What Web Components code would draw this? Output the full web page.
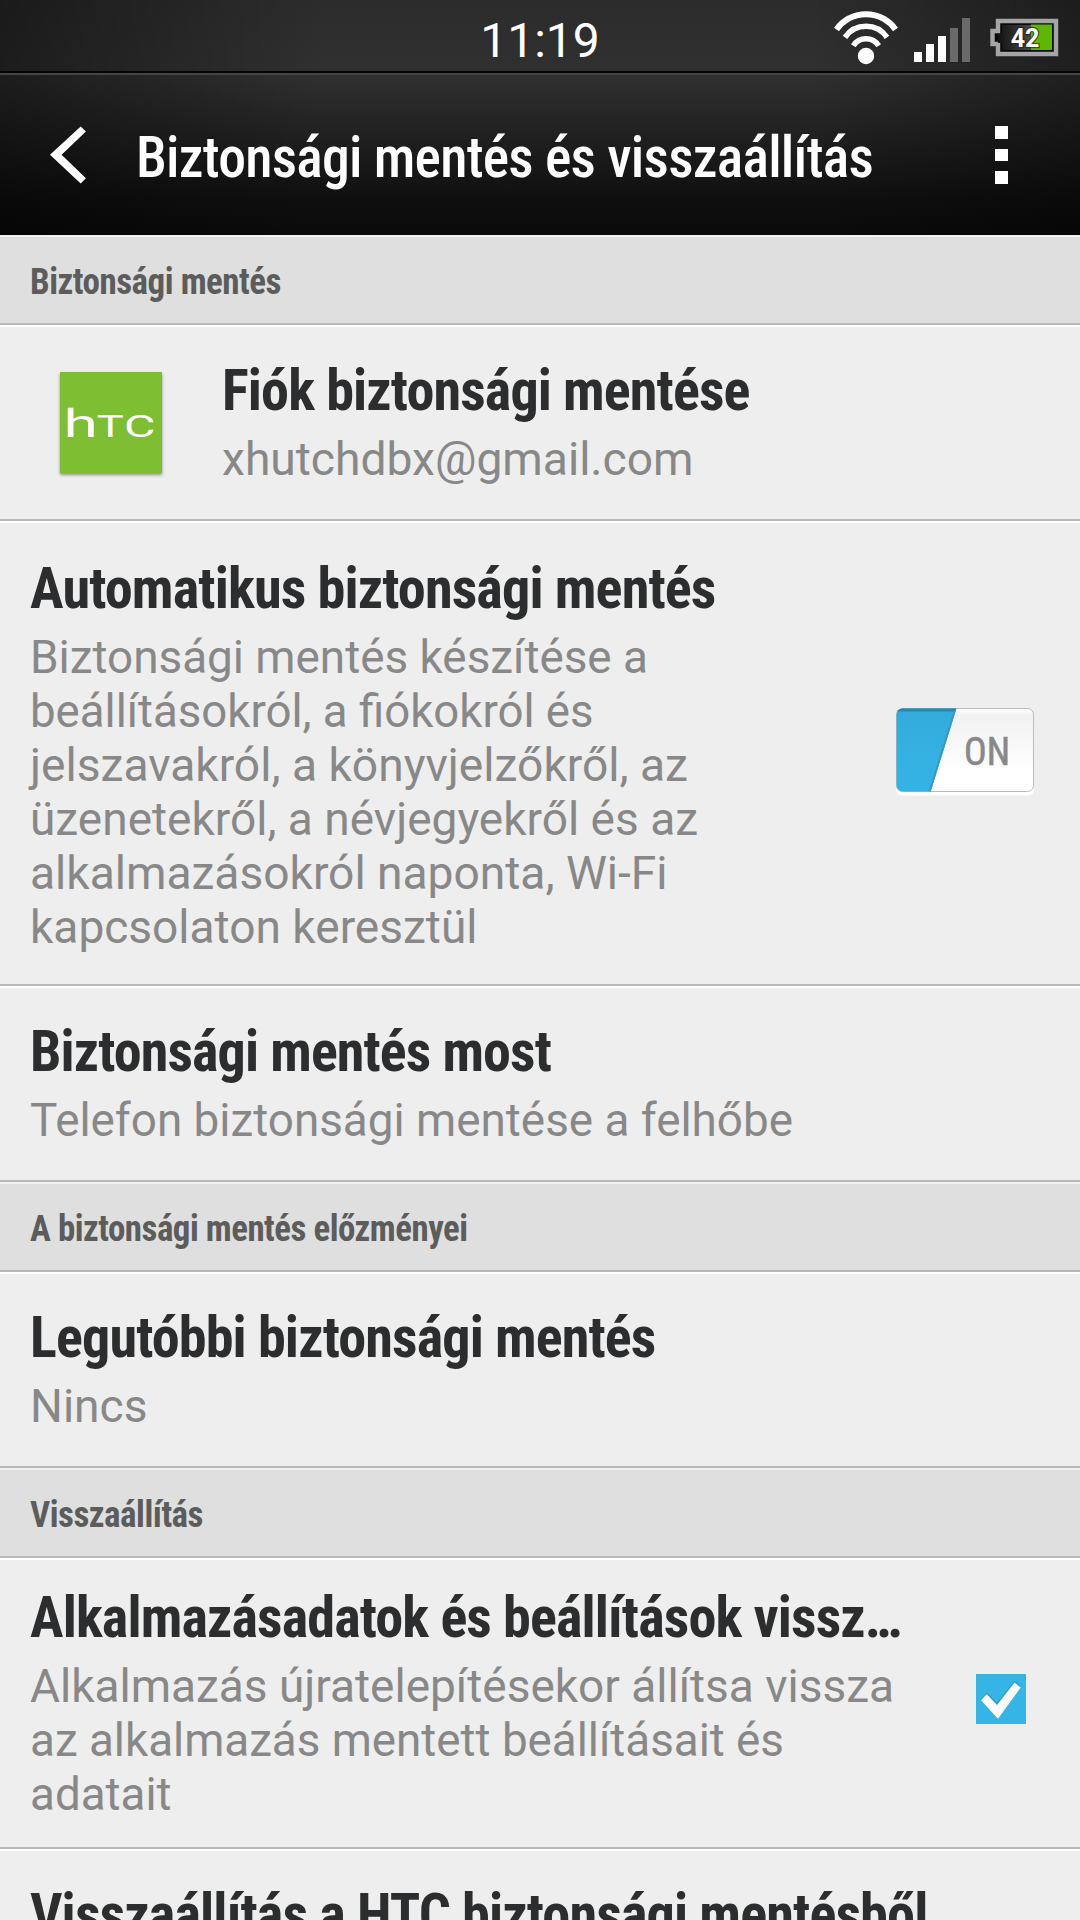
<!DOCTYPE html>
<html lang="hu">
<head>
<meta charset="utf-8">
<title>Biztonsági mentés és visszaállítás</title>
<style>
html, body {
  margin: 0;
  height: 1920px;
  overflow: hidden;
  background: #eee;
  font-family: Roboto, "Liberation Sans", sans-serif;
}
</style>
</head>
<body>
<phone-screen>
  <status-bar slot="top" time="11:19" battery="42"></status-bar>
  <action-bar slot="top"><fit-text width="737">Biztonsági mentés és visszaállítás</fit-text></action-bar>

  <section-header><fit-text width="251">Biztonsági mentés</fit-text></section-header>
  <setting-row style="--indent: 60px">
    <htc-logo slot="icon"></htc-logo>
    <fit-text slot="title" width="527.5">Fiók biztonsági mentése</fit-text>
    <fit-text width="471.5">xhutchdbx@gmail.com</fit-text>
  </setting-row>
  <setting-row style="--top: 31px; --bottom: 30px; --end: 44px">
    <fit-text slot="title" width="685.5">Automatikus biztonsági mentés</fit-text>
    <fit-text width="618">Biztonsági mentés készítése a</fit-text>
    <fit-text width="563.5">beállításokról, a fiókokról és</fit-text>
    <fit-text width="658">jelszavakról, a könyvjelzőkről, az</fit-text>
    <fit-text width="668">üzenetekről, a névjegyekről és az</fit-text>
    <fit-text width="637.5">alkalmazásokról naponta, Wi-Fi</fit-text>
    <fit-text width="447.5">kapcsolaton keresztül</fit-text>
    <toggle-switch slot="control">ON</toggle-switch>
  </setting-row>
  <setting-row>
    <fit-text slot="title" width="521">Biztonsági mentés most</fit-text>
    <fit-text width="763">Telefon biztonsági mentése a felhőbe</fit-text>
  </setting-row>

  <section-header><fit-text width="437.5">A biztonsági mentés előzményei</fit-text></section-header>
  <setting-row>
    <fit-text slot="title" width="625.5">Legutóbbi biztonsági mentés</fit-text>
    <fit-text width="117.5">Nincs</fit-text>
  </setting-row>

  <section-header><fit-text width="173">Visszaállítás</fit-text></section-header>
  <setting-row style="--top: 23px; --bottom: 26px; --end: 54px">
    <fit-text slot="title" width="871">Alkalmazásadatok és beállítások vissz…</fit-text>
    <fit-text width="864">Alkalmazás újratelepítésekor állítsa vissza</fit-text>
    <fit-text width="754">az alkalmazás mentett beállításait és</fit-text>
    <fit-text width="141.5">adatait</fit-text>
    <check-box slot="control"></check-box>
  </setting-row>
  <setting-row>
    <fit-text slot="title" width="897.5">Visszaállítás a HTC biztonsági mentésből</fit-text>
  </setting-row>
</phone-screen>

<script>
(function() {
function define(name, html, setup) {
  const template = document.createElement('template');
  template.innerHTML = html;

  customElements.define(name, class extends HTMLElement {
    constructor() {
      super();
      this.attachShadow({mode: 'open'});
      this.shadowRoot.appendChild(document.importNode(template.content, true));
    }

    connectedCallback() {
      if (setup) setup(this, this.shadowRoot);
    }
  });
}

define('phone-screen', `
<style>
:host {
  display: flex;
  flex-direction: column;
  width: 1080px;
  height: 1920px;
  overflow: hidden;
  background: #eee;
}
header {
  flex: none;
  background:
    linear-gradient(90deg, rgba(0,0,0,.4), rgba(0,0,0,0) 30%, rgba(0,0,0,0) 75%, rgba(0,0,0,.35)),
    linear-gradient(#2c2c2c, #303030 32%, #222 55%, #0f0f0f 85%, #0a0a0a);
}
main { flex: 1; min-height: 0; }
</style>
<header><slot name="top"></slot></header>
<main><slot></slot></main>`);

define('status-bar', `
<style>
:host {
  display: grid;
  grid-template-columns: 1fr auto 1fr;
  height: 71px;
  border-bottom: 2px solid #050505;
  color: #fff;
}
.time {
  grid-column: 2;
  padding-top: 12px;
  font-size: 48px;
  line-height: 57px;
}
.icons {
  display: flex;
  justify-content: flex-end;
  padding-right: 20px;
}
svg { display: block; font: 700 25px Roboto, sans-serif; }
</style>
<div class="time"></div>
<div class="icons">
  <svg width="230" height="71" viewBox="830 0 230 71">
    <g fill="none" stroke="#fff">
      <path stroke-width="6" d="M836.5 29.5A36 36 0 0 1 895.5 29.5"/>
      <path stroke-width="5.6" d="M845 37.3A25.5 25.5 0 0 1 887 37.3"/>
      <path stroke-width="5.4" d="M853.3 45.7A15 15 0 0 1 878.7 45.7"/>
    </g>
    <circle cx="866" cy="56" r="8.2" fill="#fff"/>
    <path fill="#fff" d="M914 52h8v10h-8zM926 44h8v18h-8zM938 36h8v26h-8z"/>
    <path fill="#6a6a6a" d="M950 28h8v34h-8zM962 18h8v44h-8z"/>
    <linearGradient id="empty"><stop stop-color="#111"/><stop offset="1" stop-color="#4a4a4a"/></linearGradient>
    <path fill="#0a0a0a" stroke="#a5a5a5" stroke-width="4.4" d="M998 21h58v33h-58v-10h-5.500v-13h5.500z"/>
    <path fill="url(#empty)" d="M1002 25h29v25h-29v-7h-4v-9h4z"/>
    <path fill="#5cb800" d="M1031 24.500h21v25.500h-21z"/>
    <text x="1025" y="47" text-anchor="middle" fill="#fff" stroke="#222" stroke-opacity=".7" stroke-width="2.500" paint-order="stroke"></text>
  </svg>
</div>`, (el, root) => {
  root.querySelector('.time').textContent = el.getAttribute('time');
  root.querySelector('text').textContent = el.getAttribute('battery');
});

define('action-bar', `
<style>
:host {
  display: flex;
  align-items: center;
  box-sizing: border-box;
  height: 162px;
  padding: 0 72px 0 50px;
  border-top: 2px solid #454545;
  color: #fff;
  font-size: 58px;
  font-weight: 500;
  line-height: 68px;
  font-stretch: 75%;
  letter-spacing: -.8px;
}
.title { flex: 1; padding: 3px 0 0 49.500px; }
.menu { display: grid; gap: 10px; }
.menu i { width: 13px; height: 12.500px; background: #fff; }
</style>
<svg width="36" height="58" viewBox="50 126 36 58"><path fill="#fff" d="M50 154.700L80.700 126.500 85.900 131.500 61.600 154.700 85.900 178.200 80.700 183.500z"/></svg>
<div class="title"><slot></slot></div>
<div class="menu"><i></i><i></i><i></i></div>`);

define('section-header', `
<style>
:host {
  display: block;
  box-sizing: border-box;
  height: 90px;
  padding: 24px 30px 0;
  border-top: 2px solid #f2f2f2;
  border-bottom: 2px solid #b8b8b8;
  background: #dfdfdf;
  color: #5c5c5c;
  font-size: 36px;
  font-weight: 700;
  font-stretch: 75%;
  line-height: 43px;
  letter-spacing: -.5px;
}
</style>
<slot></slot>`);

define('setting-row', `
<style>
:host {
  display: flex;
  align-items: center;
  padding: 0 var(--end, 30px) 0 var(--indent, 30px);
  border-top: 2px solid #fff;
  border-bottom: 2px solid #b8b8b8;
}
.text {
  flex: 1;
  min-width: 0;
  padding: var(--top, 29px) 0 var(--bottom, 33px);
  color: #888;
  font-size: 46px;
  line-height: 54px;
}
.title {
  margin-bottom: 8px;
  color: #2c2d2e;
  font-size: 58px;
  font-weight: 750;
  font-stretch: 75%;
  line-height: 68px;
  letter-spacing: -.9px;
}
</style>
<slot name="icon"></slot>
<div class="text">
  <div class="title"><slot name="title"></slot></div>
  <slot></slot>
</div>
<slot name="control"></slot>`);

// one line of text, squeezed or widened to the given advance width
define('fit-text', `
<style>
:host { display: block; white-space: nowrap; }
span { display: inline-block; vertical-align: top; transform-origin: 0 0; }
</style>
<span><slot></slot></span>`, (el, root) => {
  const span = root.querySelector('span');
  const width = span.getBoundingClientRect().width;
  if (width) span.style.transform = `scaleX(${(el.getAttribute('width') / width).toFixed(5)})`;
});

define('htc-logo', `
<style>
:host {
  display: block;
  width: 102px;
  height: 101px;
  margin: 0 60px 1px 0;
  background: #7dbe33;
  box-shadow: 0 2px 3px rgba(0,0,0,.4);
}
svg { display: block; font-family: Roboto, sans-serif; font-weight: 400; }
</style>
<svg width="102" height="101" fill="#fff">
  <text transform="translate(3.400 64.500) scale(1.600 1)" font-size="39">h</text>
  <text transform="translate(36.800 64.500) scale(1.460 1)" font-size="31">T</text>
  <text transform="translate(64 64.500) scale(1.560 1)" font-size="31">C</text>
</svg>`);

define('toggle-switch', `
<style>
:host { display: block; margin-bottom: 4px; }
svg { display: block; font: 400 39px Roboto, sans-serif; font-stretch: 75%; }
</style>
<svg width="140" height="88" viewBox="0 0 140 88">
  <defs>
    <linearGradient id="face" x2="0" y2="1"><stop stop-color="#fff"/><stop offset=".08" stop-color="#f1f1f1"/><stop offset=".75" stop-color="#fff"/></linearGradient>
    <linearGradient id="blue" x2="0" y2="1"><stop stop-color="#32abdb"/><stop offset="1" stop-color="#36b4e6"/></linearGradient>
    <clipPath id="box"><rect x=".5" y=".5" width="137" height="83" rx="6"/></clipPath>
  </defs>
  <rect y="4" width="138" height="83.500" rx="6" fill="#fff"/>
  <rect x=".5" y=".5" width="137" height="83" rx="6" fill="url(#face)" stroke="#bbb"/>
  <g clip-path="url(#box)">
    <path fill="url(#blue)" d="M0 0H60.500L34.500 84H0z"/>
    <path fill="#2a86ac" d="M0 0H60.500L59.500 3.500H0z"/>
    <path fill="none" stroke="#3d97bb" stroke-width="2" d="M59 2L33.500 84"/>
  </g>
  <text x="91" y="57" text-anchor="middle" textLength="46" lengthAdjust="spacingAndGlyphs" fill="#888" stroke="#888" stroke-width=".6"></text>
</svg>
<slot hidden></slot>`, (el, root) => {
  root.querySelector('text').textContent = el.textContent;
});

define('check-box', `
<style>
:host { display: block; margin-bottom: 9px; }
svg { display: block; }
</style>
<svg width="50" height="50">
  <path fill="#35b5e5" d="M0 0h50v50H0z"/>
  <path fill="#2b8fb5" opacity=".7" d="M5 25L10.700 18.500 21 29 38.500 6.500 44.700 12 22 44z"/>
  <path fill="#fff" d="M5 26.300L10.700 20 21 31 38.500 8.500 44.700 13.500 22 44.700z"/>
</svg>`);
}());
</script>
</body>
</html>
